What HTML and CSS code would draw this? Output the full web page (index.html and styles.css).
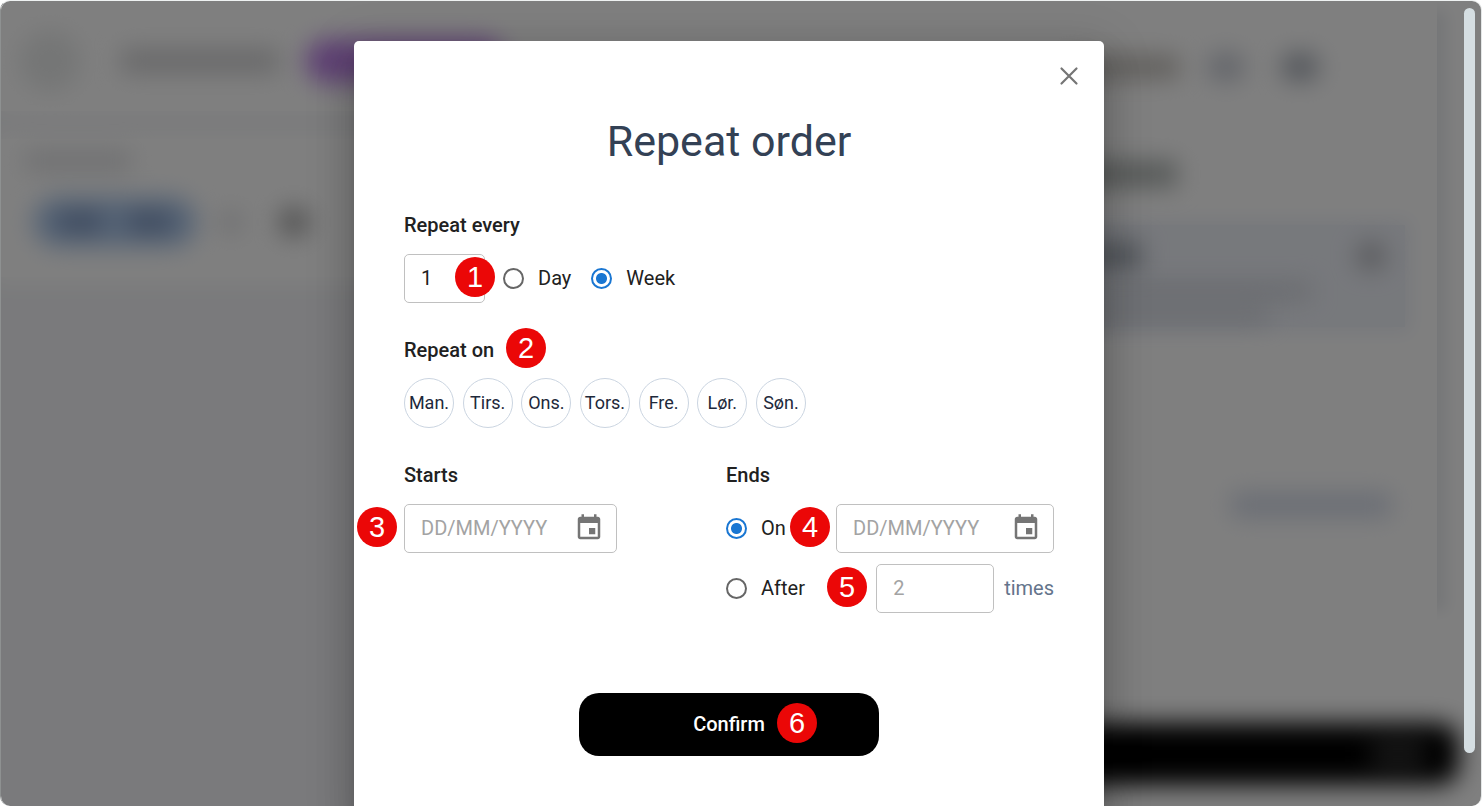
FILE: index.html
```html
<!DOCTYPE html>
<html lang="en">
<head>
  <meta charset="utf-8">
  <title>Repeat order</title>
  <link rel="stylesheet" href="styles.css">
</head>
<body>
  <div class="window">

    <!-- Blurred page behind the dialog -->
    <div class="page" aria-hidden="true">
      <div class="page-main">
        <div class="page-header">
          <div class="blob avatar"></div>
          <div class="blob name"></div>
          <div class="blob tag"></div>
        </div>
        <div class="page-card">
          <div class="blob card-label"></div>
          <div class="card-row">
            <div class="blob chip"><span></span><span></span></div>
            <div class="blob dot"></div>
            <div class="blob dot dark"></div>
          </div>
        </div>
      </div>
      <div class="page-side">
        <div class="side-panel">
          <div class="side-row">
            <div class="blob text-brown"></div>
            <div class="blob pill"></div>
            <div class="blob pill dark"></div>
          </div>
          <div class="side-row second">
            <div class="blob text-dark"></div>
          </div>
          <div class="side-box">
            <div class="box-head">
              <div class="blob box-title"></div>
              <div class="blob box-icon"></div>
            </div>
            <div class="blob box-line"></div>
            <div class="blob box-line short"></div>
          </div>
          <div class="blob side-link"></div>
        </div>
        <div class="side-bar"><span></span></div>
      </div>
    </div>

    <div class="overlay">
      <div class="dialog-area">
        <form class="dialog" role="dialog" aria-labelledby="dialogTitle">
          <button type="button" class="close-button" aria-label="Close">
            <svg width="20" height="20" viewBox="0 0 20 20">
              <path d="M2.5 2.5L17.5 17.5M17.5 2.5L2.5 17.5" fill="none" stroke="#757575" stroke-width="2.2" stroke-linecap="round"/>
            </svg>
          </button>

          <h1 class="title" id="dialogTitle">Repeat order</h1>

          <section class="section">
            <label class="label" for="interval">Repeat every</label>
            <div class="row">
              <input class="field interval" id="interval" type="text" value="1">
              <label class="radio"><input type="radio" name="unit">Day</label>
              <label class="radio"><input type="radio" name="unit" checked>Week</label>
              <span class="badge badge-1">1</span>
            </div>
          </section>

          <section class="section">
            <h2 class="label">Repeat on</h2>
            <span class="badge badge-2">2</span>
            <div class="days">
              <button type="button" class="day">Man.</button>
              <button type="button" class="day">Tirs.</button>
              <button type="button" class="day">Ons.</button>
              <button type="button" class="day">Tors.</button>
              <button type="button" class="day">Fre.</button>
              <button type="button" class="day">Lør.</button>
              <button type="button" class="day">Søn.</button>
            </div>
          </section>

          <div class="columns">
            <section>
              <label class="label" for="starts">Starts</label>
              <div class="row">
                <div class="field date">
                  <input id="starts" type="text" placeholder="DD/MM/YYYY">
                  <button type="button" class="calendar" aria-label="Choose start date">
                    <svg width="30" height="30" viewBox="0 0 24 24" fill="#757575">
                      <path d="M17 12h-5v5h5v-5zM16 1v2H8V1H6v2H5c-1.11 0-1.99.9-1.99 2L3 19c0 1.1.89 2 2 2h14c1.1 0 2-.9 2-2V5c0-1.1-.9-2-2-2h-1V1h-2zm3 18H5V8h14v11z"/>
                    </svg>
                  </button>
                </div>
                <span class="badge badge-3">3</span>
              </div>
            </section>

            <section>
              <h2 class="label">Ends</h2>
              <div class="row">
                <label class="radio"><input type="radio" name="ends" checked>On</label>
                <div class="field date end-date">
                  <input type="text" placeholder="DD/MM/YYYY" aria-label="End date">
                  <button type="button" class="calendar" aria-label="Choose end date">
                    <svg width="30" height="30" viewBox="0 0 24 24" fill="#757575">
                      <path d="M17 12h-5v5h5v-5zM16 1v2H8V1H6v2H5c-1.11 0-1.99.9-1.99 2L3 19c0 1.1.89 2 2 2h14c1.1 0 2-.9 2-2V5c0-1.1-.9-2-2-2h-1V1h-2zm3 18H5V8h14v11z"/>
                    </svg>
                  </button>
                </div>
                <span class="badge badge-4">4</span>
              </div>
              <div class="row after-row">
                <label class="radio"><input type="radio" name="ends">After</label>
                <input class="field count" id="count" type="text" placeholder="2">
                <label class="times" for="count">times</label>
                <span class="badge badge-5">5</span>
              </div>
            </section>
          </div>

          <button type="submit" class="confirm">Confirm<span class="badge badge-6">6</span></button>
        </form>
      </div>
      <div class="scrollbar"><div class="thumb"></div></div>
    </div>
  </div>
</body>
</html>
```

FILE: styles.css
```css
* {
  box-sizing: border-box;
}

body {
  margin: 0;
  background-color: #fff;
  font-family: Roboto, "Liberation Sans", sans-serif;
  font-size: 20px;
  line-height: 30px;
  color: #212121;
}

h1, h2 {
  margin: 0;
}

button, input {
  font-family: inherit;
  font-size: inherit;
  color: inherit;
}

button {
  padding: 0;
  border: none;
  background: none;
  cursor: pointer;
}

/* page and overlay share one grid cell */
.window {
  display: grid;
  grid-template: 100% / 100%;
  height: 100vh;
  overflow: hidden;
  border: 1px solid #8e9191;
  border-top-color: #eef1f1;
  border-right-color: #e4e7e7;
  border-bottom: none;
  border-radius: 10px;
}

.page, .overlay {
  grid-area: 1 / 1;
}

/* Blurred page */
.page {
  display: flex;
  overflow: hidden;
  background-color: #fff;
}

.blob {
  flex: none;
  filter: blur(12px);
}

.page-main {
  flex: 1;
  background-color: #f4f5f8;
}

.page-header {
  display: flex;
  align-items: center;
  height: 110px;
  padding: 10px 18px 0;
  background-color: #fff;
  box-shadow: 0 0 20px 4px #fff;
}

.avatar {
  width: 62px;
  height: 62px;
  border-radius: 50%;
  background-color: #eaecec;
}

.name {
  width: 158px;
  height: 24px;
  margin-left: 40px;
  background-color: #d2d2d4;
}

.tag {
  width: 200px;
  height: 44px;
  margin-left: 26px;
  border-radius: 22px;
  background-color: #c084ea;
}

.page-card {
  height: 138px;
  margin-top: 28px;
  padding: 12px 24px;
  background-color: #fff;
  box-shadow: 0 0 20px 8px #fff;
}

.card-label {
  width: 106px;
  height: 20px;
  background-color: #dfe0e3;
}

.card-row {
  display: flex;
  align-items: center;
  height: 50px;
  margin-top: 26px;
  padding-left: 8px;
}

.chip {
  display: flex;
  justify-content: space-evenly;
  align-items: center;
  width: 164px;
  height: 50px;
  border-radius: 25px;
  background-color: #acc8ec;
}

.chip span {
  width: 44px;
  height: 22px;
  background-color: #8098c0;
}

.dot {
  width: 24px;
  height: 24px;
  margin-left: 22px;
  border-radius: 50%;
  background-color: #dedfe2;
}

.dot.dark {
  width: 30px;
  height: 30px;
  margin-left: 36px;
  background-color: #a4a4a4;
}

.page-side {
  display: flex;
  flex-direction: column;
  width: 500px;
  background-color: #fff;
}

.side-panel {
  height: 620px;
  margin-right: 44px;
  padding: 50px 32px 0 86px;
  box-shadow: 20px 0 14px -10px #eceef1;
}

.side-row {
  display: flex;
  align-items: center;
  height: 32px;
}

.side-row.second {
  margin-top: 75px;
}

.text-brown {
  width: 112px;
  height: 22px;
  background-color: #c0bcb6;
}

.pill {
  width: 38px;
  height: 28px;
  margin-left: 28px;
  border-radius: 14px;
  background-color: #c6cad4;
}

.pill.dark {
  margin-left: 36px;
  background-color: #a8aeb8;
}

.text-dark {
  width: 110px;
  height: 26px;
  background-color: #acb2b0;
}

.side-box {
  height: 102px;
  margin-top: 35px;
  padding: 10px 20px;
  background-color: #eff2f9;
  box-shadow: 0 0 18px 6px #eff2f9;
}

.box-head {
  display: flex;
  justify-content: space-between;
  align-items: center;
  height: 42px;
}

.box-title {
  width: 54px;
  height: 28px;
  background-color: #a0a8b2;
}

.box-icon {
  width: 28px;
  height: 28px;
  border-radius: 50%;
  background-color: #b0b2b8;
}

.box-line {
  width: 224px;
  height: 16px;
  margin-top: 6px;
  background-color: #d0d4dc;
}

.box-line.short {
  width: 180px;
}

.side-link {
  width: 160px;
  height: 24px;
  margin: 166px 14px 0 auto;
  background-color: #d4dbea;
}

.side-bar {
  display: flex;
  justify-content: flex-end;
  align-items: center;
  height: 62px;
  margin: 102px 22px 0 0;
  padding-right: 34px;
  border-radius: 20px;
  background-color: #000;
  filter: blur(12px);
}

.side-bar span {
  width: 54px;
  height: 22px;
  background-color: #383838;
}

/* Overlay */
.overlay {
  position: relative;
  display: flex;
  background-color: rgba(0, 0, 0, 0.5);
}

.dialog-area {
  flex: 1;
  padding: 40px 24px 0;
}

.scrollbar {
  width: 24px;
  padding: 7px 6px 53px 7px;
}

.thumb {
  width: 11px;
  height: 100%;
  border-radius: 6px;
  background-color: #d5dee2;
}

/* Dialog */
.dialog {
  position: relative;
  max-width: 750px;
  margin: 0 auto;
  padding: 74px 50px 64px;
  border-radius: 5px;
  background-color: #fff;
  box-shadow: 0 11px 15px -7px rgba(0, 0, 0, 0.2),
    0 24px 38px 3px rgba(0, 0, 0, 0.14),
    0 9px 46px 8px rgba(0, 0, 0, 0.12);
}

.close-button {
  position: absolute;
  top: 20px;
  right: 20px;
  display: flex;
  justify-content: center;
  align-items: center;
  width: 30px;
  height: 30px;
}

.title {
  margin-bottom: 43px;
  font-size: 43px;
  font-weight: 400;
  line-height: 52px;
  text-align: center;
  color: #334155;
}

.section {
  position: relative;
  margin-bottom: 32px;
}

.label {
  display: block;
  font-size: 20px;
  font-weight: 500;
}

.row {
  position: relative;
  display: flex;
  align-items: center;
  margin-top: 14px;
}

.field {
  height: 49px;
  padding: 0 16px 2px;
  border: 1px solid #c0c0c0;
  border-radius: 5px;
  background-color: #fff;
}

input::placeholder {
  color: #a3a3a3;
  opacity: 1;
}

.interval {
  width: 81px;
  margin-right: 18px;
}

.radio {
  display: flex;
  align-items: center;
  gap: 14px;
  margin-right: 20px;
  line-height: 29px;
}

.radio input {
  appearance: none;
  width: 21px;
  height: 21px;
  margin: 0;
  border: 2px solid #666;
  border-radius: 50%;
}

.radio input:checked {
  border-color: #1976d2;
  background: radial-gradient(circle, #1976d2 5px, transparent 6px);
}

.days {
  display: flex;
  justify-content: space-between;
  max-width: 402px;
  margin-top: 13px;
}

.day {
  display: flex;
  justify-content: center;
  align-items: center;
  width: 50px;
  height: 50px;
  padding-bottom: 2px;
  border: 1px solid #cbd5e1;
  border-radius: 50%;
  font-size: 18px;
  color: #1e293b;
}

.columns {
  display: grid;
  grid-template-columns: 1fr 328px;
}

.date {
  display: flex;
  align-items: center;
  width: 213px;
  padding-right: 12px;
}

.date input {
  flex: 1;
  min-width: 0;
  padding: 0;
  border: none;
  outline: none;
  background: none;
}

.calendar {
  display: flex;
}

.end-date {
  width: 218px;
  margin-left: auto;
}

.after-row {
  margin-top: 11px;
}

.count {
  width: 118px;
  margin-left: auto;
}

.times {
  margin-left: 10px;
  line-height: 29px;
  color: #64748b;
}

.confirm {
  position: relative;
  display: block;
  width: 300px;
  height: 63px;
  margin: 80px auto 0;
  padding-bottom: 2px;
  border-radius: 20px;
  background-color: #000;
  font-size: 20px;
  font-weight: 500;
  color: #fff;
}

/* Numbered markers */
.badge {
  position: absolute;
  top: 3px;
  width: 40px;
  height: 40px;
  border-radius: 50%;
  background-color: #eb0707;
  font-family: "Liberation Sans", Arial, sans-serif;
  font-size: 29px;
  font-weight: 400;
  line-height: 40px;
  text-align: center;
  color: #fff;
}

.badge-1 {
  left: 51px;
}

.badge-2 {
  top: -7px;
  left: 102px;
}

.badge-3 {
  left: -47px;
}

.badge-4 {
  left: 64px;
}

.badge-5 {
  left: 101px;
}

.badge-6 {
  top: 10px;
  left: 198px;
}
```
